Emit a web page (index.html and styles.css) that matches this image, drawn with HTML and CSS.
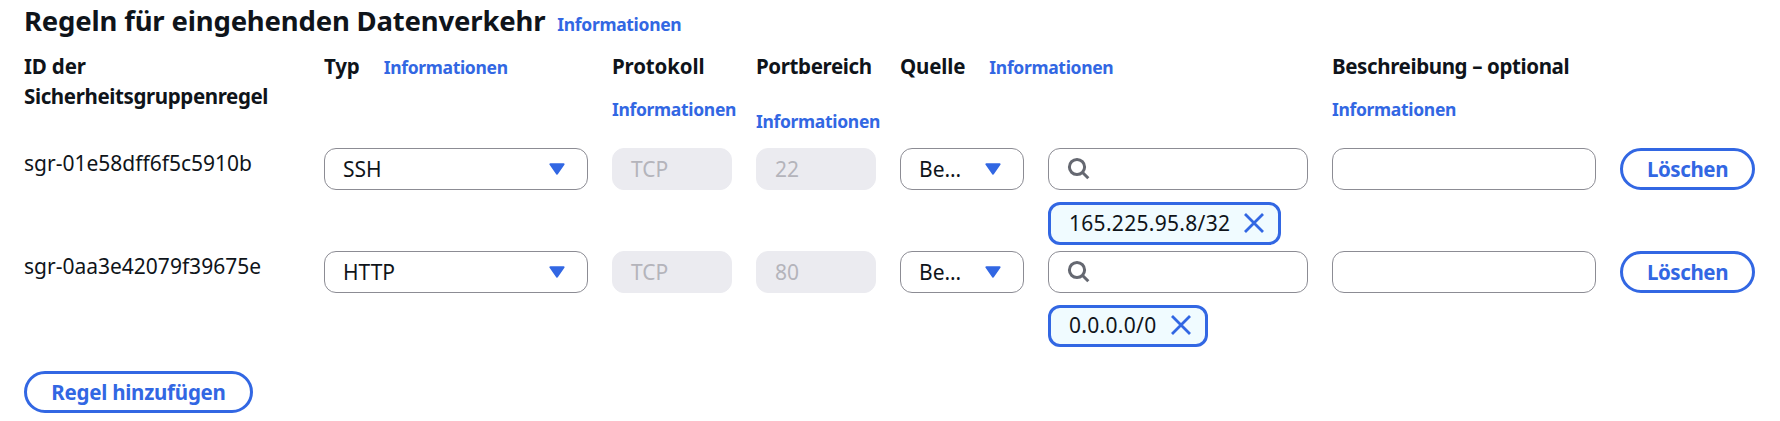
FILE: index.html
```html
<!DOCTYPE html>
<html lang="de">
<head>
<meta charset="utf-8">
<title>Regeln für eingehenden Datenverkehr</title>
<link rel="stylesheet" href="styles.css">
</head>
<body>
<svg class="sprite" aria-hidden="true">
  <symbol id="caret" viewBox="0 0 16 12"><path d="M1.4 1.2h13.2L8 10.7z" fill="currentColor" stroke="currentColor" stroke-width="2" stroke-linejoin="round"/></symbol>
  <symbol id="search" viewBox="0 0 24 24"><circle cx="10" cy="10" r="7.6" fill="none" stroke="currentColor" stroke-width="3"/><path d="M15.3 15.3l6 6" fill="none" stroke="currentColor" stroke-width="3"/></symbol>
  <symbol id="close" viewBox="0 0 20 20"><path d="M1 1l18 18M19 1L1 19" fill="none" stroke="currentColor" stroke-width="2.8"/></symbol>
</svg>
<main class="panel">
  <header class="title-row">
    <h1 class="title">Regeln für eingehenden Datenverkehr</h1>
    <a class="info">Informationen</a>
  </header>

  <div class="grid head">
    <div class="label">ID der<br><span class="tight">Sicherheitsgruppenregel</span></div>
    <div class="inline"><span class="label">Typ</span><a class="info">Informationen</a></div>
    <div class="stack"><span class="label">Protokoll</span><a class="info">Informationen</a></div>
    <div class="stack lower"><span class="label tight">Portbereich</span><a class="info">Informationen</a></div>
    <div class="inline"><span class="label">Quelle</span><a class="info">Informationen</a></div>
    <div class="stack"><span class="label tight">Beschreibung – optional</span><a class="info">Informationen</a></div>
  </div>

  <div class="grid rule">
    <div class="rule-id">sgr-01e58dff6f5c5910b</div>
    <div class="field select"><span>SSH</span><svg class="caret"><use href="#caret"/></svg></div>
    <div class="field disabled">TCP</div>
    <div class="field disabled">22</div>
    <div class="source">
      <div class="field select small"><span>Be…</span><svg class="caret"><use href="#caret"/></svg></div>
      <div class="lookup">
        <div class="field search"><svg class="glass"><use href="#search"/></svg></div>
        <div class="chip tall"><span class="cidr">165.225.95.8/32</span><svg class="close"><use href="#close"/></svg></div>
      </div>
    </div>
    <div class="field"></div>
    <button class="button delete">Löschen</button>
  </div>

  <div class="grid rule">
    <div class="rule-id">sgr-0aa3e42079f39675e</div>
    <div class="field select"><span>HTTP</span><svg class="caret"><use href="#caret"/></svg></div>
    <div class="field disabled">TCP</div>
    <div class="field disabled">80</div>
    <div class="source">
      <div class="field select small"><span>Be…</span><svg class="caret"><use href="#caret"/></svg></div>
      <div class="lookup">
        <div class="field search"><svg class="glass"><use href="#search"/></svg></div>
        <div class="chip short"><span class="cidr">0.0.0.0/0</span><svg class="close"><use href="#close"/></svg></div>
      </div>
    </div>
    <div class="field"></div>
    <button class="button delete">Löschen</button>
  </div>

  <button class="button add">Regel hinzufügen</button>
</main>
</body>
</html>
```

FILE: styles.css
```css
* { box-sizing: border-box; }

body {
  margin: 0;
  background: #fff;
  color: #0f141a;
  font: 400 21px/30px "Noto Sans", "Open Sans", sans-serif;
}

.sprite { display: none; }

.panel { padding: 3px 24px 0; }

.title-row {
  display: flex;
  align-items: baseline;
  gap: 12px;
  height: 36px;
  margin-bottom: 12px;
}

.title {
  margin: 0;
  font-size: 27.5px;
  line-height: 36px;
  font-weight: 700;
  letter-spacing: -0.18px;
}

.info {
  color: #3267e3;
  font-size: 17.5px;
  line-height: 27px;
  font-weight: 700;
  letter-spacing: -0.32px;
}

.label {
  font-size: 20.5px;
  font-weight: 700;
  letter-spacing: -0.15px;
}

.tight { letter-spacing: -0.38px; }

.grid {
  display: grid;
  grid-template-columns: 276px 264px 120px 120px 408px 264px 135px;
  column-gap: 24px;
  align-items: start;
}

.head { height: 97px; white-space: nowrap; }

.inline { display: flex; align-items: baseline; gap: 24px; }

.stack { display: flex; flex-direction: column; gap: 15px; }
.stack.lower { gap: 27px; }

.rule { height: 103px; }

.rule-id { line-height: 30px; }

.field {
  height: 42px;
  padding: 0 18px 1px;
  border: 1px solid #8c8c94;
  border-radius: 12px;
  display: flex;
  align-items: center;
}

.select { justify-content: space-between; padding-right: 22px; }

.small { width: 124px; flex: none; }

.caret { width: 16px; height: 12px; color: #3267e3; }

.disabled {
  background: #ebebf0;
  border-color: #ebebf0;
  color: #b4b4bb;
}

.source { display: flex; gap: 24px; }

.lookup { flex: 1; }

.glass { width: 24px; height: 24px; color: #656871; }

.chip {
  height: 42px;
  margin-top: 12px;
  padding: 0 14px 2px 18px;
  border: 3px solid #3267e3;
  border-radius: 12px;
  background: #f0fbff;
  display: flex;
  align-items: center;
  justify-content: space-between;
}

.tall { width: 233px; height: 43px; }
.short { width: 160px; }

.cidr { letter-spacing: 0.3px; }

.close { width: 20px; height: 20px; color: #3267e3; }

.button {
  height: 42px;
  padding: 0 0 1px;
  border: 3px solid #3267e3;
  border-radius: 21px;
  background: #fff;
  color: #3267e3;
  font: 700 20.5px/30px "Noto Sans", "Open Sans", sans-serif;
  letter-spacing: -0.25px;
}

.delete { width: 135px; letter-spacing: -0.4px; }

.add { display: block; width: 229px; margin-top: 17px; }
```
